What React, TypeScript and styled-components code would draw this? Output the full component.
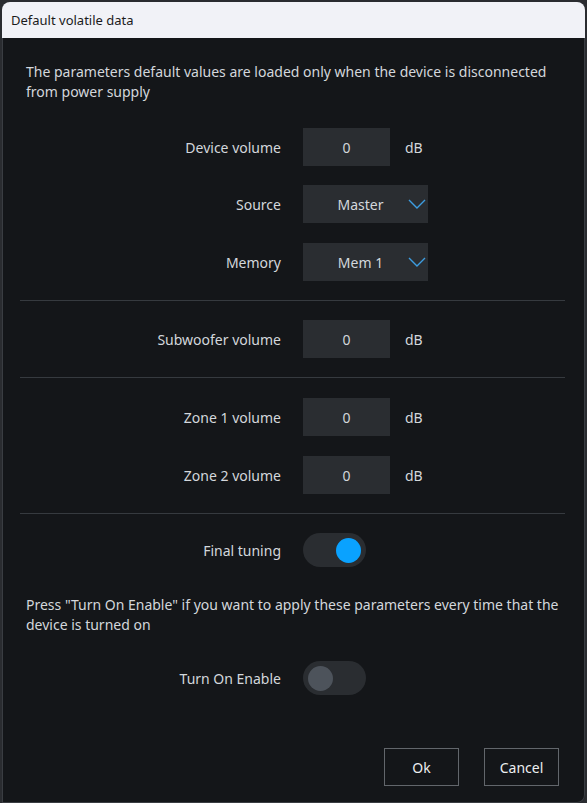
import React from 'react';
import styled, { createGlobalStyle } from 'styled-components';

const Global = createGlobalStyle`
  html, body { margin: 0; padding: 0; background: #1d1f22; }
  body { font-family: "Noto Sans", "Open Sans", sans-serif; }
`;

const Page = styled.div`
  width: 587px;
  height: 803px;
  padding: 2px 2px 0 2px;
  box-sizing: border-box;
  background: #2a2c30;
`;

const Window = styled.div`
  height: 801px;
  display: flex;
  flex-direction: column;
  border-radius: 8px 8px 8px 0;
  overflow: hidden;
  background: #141619;
  box-shadow: inset 0 0 0 1px #3a3d42;
`;

const TitleBar = styled.div`
  height: 36px;
  flex: none;
  display: flex;
  align-items: center;
  padding-left: 9px;
  background: #f1f2f7;
  color: #1b1b1b;
  font-size: 13px;
`;

const Body = styled.div`
  flex: 1;
  display: flex;
  flex-direction: column;
  padding: 24px 20px 0 18px;
`;

const Note = styled.p<{ $top?: number }>`
  margin: ${(p) => p.$top ?? 0}px 0 0 0;
  padding-left: 6px;
  font-size: 14px;
  line-height: 20px;
  color: #d3d7dc;
`;

const Row = styled.div<{ $top?: number }>`
  display: grid;
  grid-template-columns: 261px auto;
  column-gap: 22px;
  align-items: center;
  margin-top: ${(p) => p.$top ?? 19}px;
`;

const Label = styled.span`
  text-align: right;
  font-size: 14px;
  color: #d3d7dc;
`;

const Control = styled.div`
  display: flex;
  align-items: center;
`;

const NumBox = styled.div`
  width: 87px;
  height: 38px;
  display: flex;
  align-items: center;
  justify-content: center;
  background: #2a2d31;
  color: #d3d7dc;
  font-size: 14px;
`;

const Unit = styled.span`
  margin-left: 15px;
  font-size: 14px;
  color: #d3d7dc;
`;

const Select = styled.div`
  width: 125px;
  height: 38px;
  display: flex;
  align-items: center;
  background: #2a2d31;
  color: #d3d7dc;
  font-size: 14px;
`;

const SelectText = styled.span`
  flex: 1;
  text-align: center;
  padding-left: 10px;
`;

const Chevron = styled.svg`
  width: 18px;
  height: 10px;
  margin-right: 2px;
`;

const Divider = styled.div<{ $top?: number }>`
  height: 1px;
  background: #363a3f;
  margin-top: ${(p) => p.$top ?? 19}px;
`;

const Toggle = styled.div<{ $on: boolean }>`
  width: 63px;
  height: 34px;
  border-radius: 17px;
  background: #2a2d31;
  display: flex;
  align-items: center;
  justify-content: ${(p) => (p.$on ? 'flex-end' : 'flex-start')};
  padding: 0 5px;
  box-sizing: border-box;
`;

const Knob = styled.div<{ $on: boolean }>`
  width: 25px;
  height: 25px;
  border-radius: 50%;
  background: ${(p) => (p.$on ? '#0aa2ff' : '#4d535b')};
`;

const Footer = styled.div`
  display: flex;
  justify-content: flex-end;
  gap: 25px;
  margin-top: 53px;
  padding-right: 6px;
`;

const Button = styled.button`
  width: 75px;
  height: 38px;
  background: transparent;
  border: 1px solid #62666b;
  color: #eceef0;
  font-family: inherit;
  font-size: 14px;
`;

const Arrow = () => (
  <Chevron viewBox="0 0 18 10">
    <path d="M1 1 L9 9 L17 1" fill="none" stroke="#3d9de0" strokeWidth="1.4" />
  </Chevron>
);

const Volume = ({ label, top }: { label: string; top?: number }) => (
  <Row $top={top}>
    <Label>{label}</Label>
    <Control>
      <NumBox>0</NumBox>
      <Unit>dB</Unit>
    </Control>
  </Row>
);

const Choice = ({ label, value, top }: { label: string; value: string; top?: number }) => (
  <Row $top={top}>
    <Label>{label}</Label>
    <Control>
      <Select>
        <SelectText>{value}</SelectText>
        <Arrow />
      </Select>
    </Control>
  </Row>
);

export default function App() {
  return (
    <>
      <Global />
      <Page>
        <Window>
          <TitleBar>Default volatile data</TitleBar>
          <Body>
            <Note>
              The parameters default values are loaded only when the device is disconnected from power supply
            </Note>
            <Volume label="Device volume" top={26} />
            <Choice label="Source" value="Master" />
            <Choice label="Memory" value="Mem 1" top={20} />
            <Divider />
            <Volume label="Subwoofer volume" top={19} />
            <Divider />
            <Volume label="Zone 1 volume" top={20} />
            <Volume label="Zone 2 volume" top={20} />
            <Divider />
            <Row $top={19}>
              <Label>Final tuning</Label>
              <Control>
                <Toggle $on>
                  <Knob $on />
                </Toggle>
              </Control>
            </Row>
            <Note $top={28}>
              Press "Turn On Enable" if you want to apply these parameters every time that the device is turned on
            </Note>
            <Row $top={26}>
              <Label>Turn On Enable</Label>
              <Control>
                <Toggle $on={false}>
                  <Knob $on={false} />
                </Toggle>
              </Control>
            </Row>
            <Footer>
              <Button>Ok</Button>
              <Button>Cancel</Button>
            </Footer>
          </Body>
        </Window>
      </Page>
    </>
  );
}
